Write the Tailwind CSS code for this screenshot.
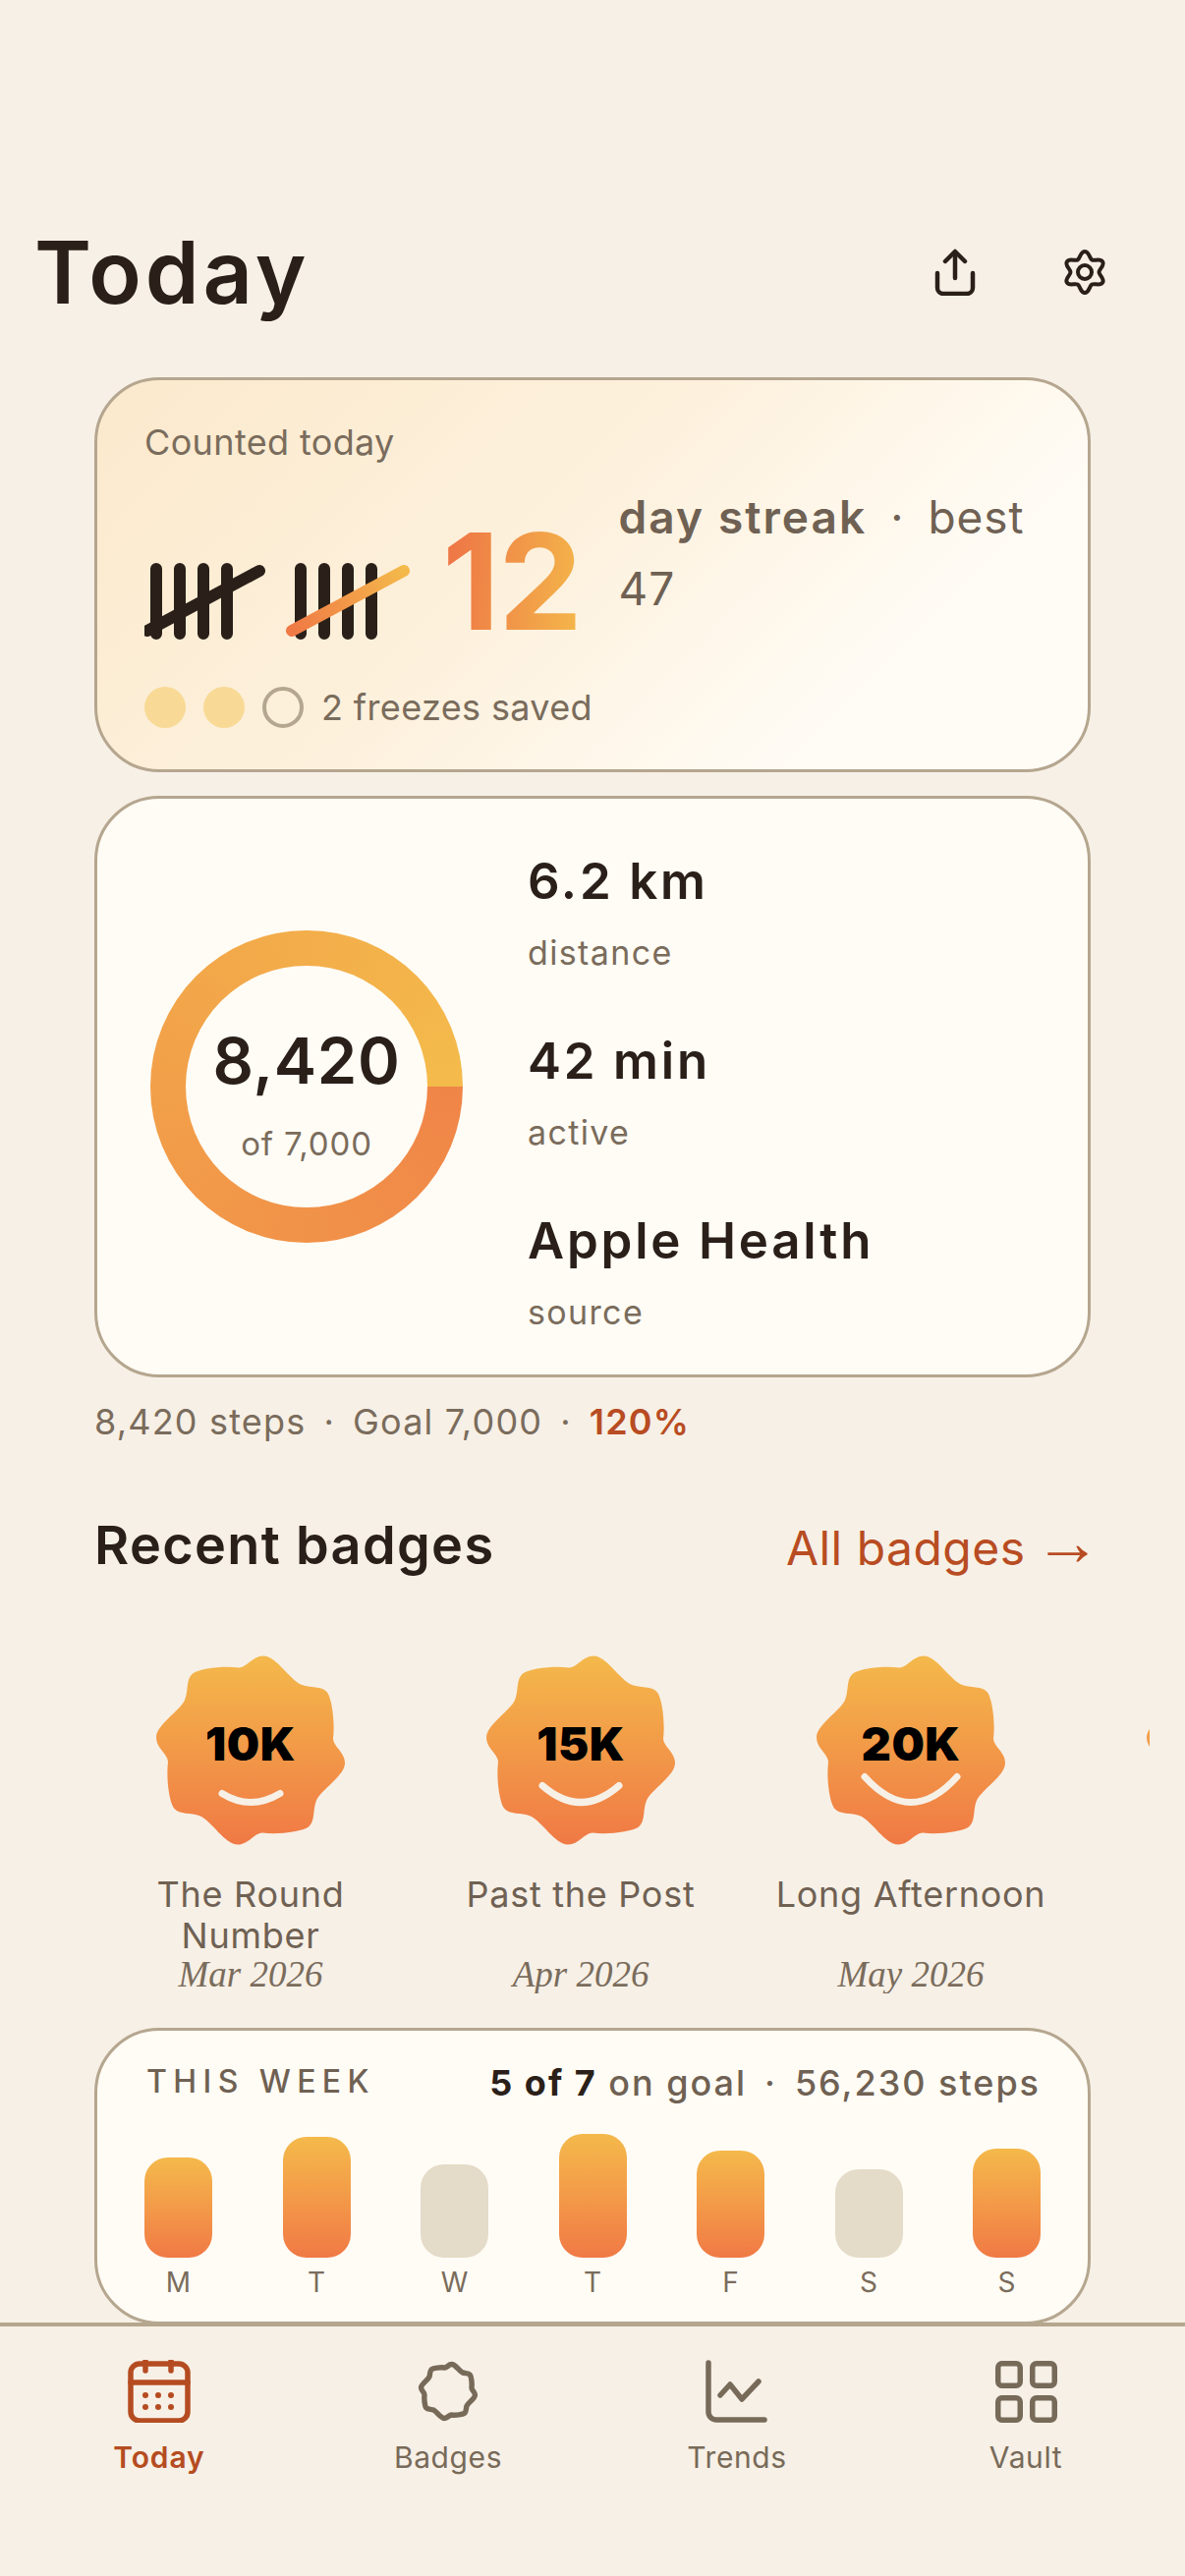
<!DOCTYPE html>
<html lang="en">
<head>
    <meta charset="UTF-8">
    <meta name="viewport" content="width=device-width, initial-scale=1.0">
    <title>Today</title>
    <script src="https://cdn.jsdelivr.net/npm/@tailwindcss/browser@4"></script>
</head>
<body class="relative w-[1206px] h-[2622px] overflow-hidden bg-[#f7f0e6] font-['Inter',sans-serif] text-[#2a2019]">
    <svg width="0" height="0" class="absolute">
        <defs>
            <linearGradient id="warm" x1="0" y1="0" x2="0" y2="1">
                <stop offset="0" stop-color="#f4b94b"/>
                <stop offset="1" stop-color="#f07945"/>
            </linearGradient>
        </defs>
    </svg>

    <!-- header -->
    <header class="pt-[230px] pl-[35px] flex items-center h-[324px]">
        <h1 class="text-[88px] leading-[94px] font-semibold tracking-[0.045em]">Today</h1>
        <div class="ml-auto mr-[78px] flex items-center gap-[84px]">
            <svg width="48" height="48" viewBox="0 0 48 48" fill="none" stroke="#2a2019" stroke-width="4.5" stroke-linecap="round" stroke-linejoin="round">
                <path d="M6 25V40a6 6 0 0 0 6 6H36a6 6 0 0 0 6-6V25"/>
                <path d="M24 30V4"/>
                <path d="M14 13L24 3L34 13"/>
            </svg>
            <svg width="48" height="48" viewBox="0 0 48 48" fill="none" stroke="#2a2019" stroke-width="4" stroke-linejoin="round">
                <path d="M24 3C28.5 3 28.65 9.9 31.25 11.4C33.85 12.9 39.95 9.6 42.2 13.5C44.45 17.4 38.5 21 38.5 24C38.5 27 44.45 30.6 42.2 34.5C39.95 38.4 33.85 35.1 31.25 36.6C28.65 38.1 28.5 45 24 45C19.5 45 19.35 38.1 16.75 36.6C14.15 35.1 8.05 38.4 5.8 34.5C3.55 30.6 9.5 27 9.5 24C9.5 21 3.55 17.4 5.8 13.5C8.05 9.6 14.15 12.9 16.75 11.4C19.35 9.9 19.5 3 24 3Z"/>
                <circle cx="24" cy="24" r="7"/>
            </svg>
        </div>
    </header>

    <main class="px-[96px] mt-[60px]">
        <!-- streak card -->
        <section class="h-[402px] border-[3px] border-[#b5a68f] rounded-[66px] bg-[linear-gradient(135deg,#fbe9cc_0%,#fdf1dd_45%,#fffcf6_80%)] pl-[48px] pt-[39px]">
            <p class="text-[36px] leading-[48px] text-[#7a6c5c] tracking-[0.01em]">Counted today</p>
            <div class="mt-[17px] h-[170px] flex items-start">
                <svg class="mt-[76px] shrink-0" width="270" height="90" viewBox="147 567 270 90" fill="none" stroke-width="12" stroke-linecap="round">
                    <g stroke="#2a2019">
                        <path d="M159 579V645M183 579V645M207 579V645M231 579V645"/>
                        <path d="M150 642L264 581"/>
                        <path d="M306 579V645M330 579V645M354 579V645M378 579V645"/>
                    </g>
                    <path d="M297 642L411 581" stroke="url(#slash2)"/>
                    <defs>
                        <linearGradient id="slash2" gradientUnits="userSpaceOnUse" x1="297" y1="642" x2="411" y2="581">
                            <stop offset="0" stop-color="#f07945"/>
                            <stop offset="1" stop-color="#f4b94b"/>
                        </linearGradient>
                    </defs>
                </svg>
                <span class="ml-[33px] mt-[35px] text-[136px] leading-[132px] font-bold tracking-[-0.01em] bg-[linear-gradient(95deg,#ee7846_10%,#f4b84a)] bg-clip-text text-transparent">12</span>
                <p class="ml-[38px] -mt-[1px] text-[46px] leading-[73px] text-[#6f6153] tracking-[0.02em] whitespace-nowrap"><span class="font-semibold tracking-[0.045em]">day streak</span><span class="mx-[24px]">·</span>best<br>47</p>
            </div>
            <div class="mt-[38px] h-[42px] flex items-center gap-[18px]">
                <span class="w-[42px] h-[42px] rounded-full bg-[#f8da96]"></span>
                <span class="w-[42px] h-[42px] rounded-full bg-[#f8da96]"></span>
                <span class="w-[42px] h-[42px] rounded-full border-[4px] border-[#b5a68f]"></span>
                <span class="text-[36px] leading-[42px] text-[#7a6c5c] tracking-[0.01em]">2 freezes saved</span>
            </div>
        </section>

        <!-- steps card -->
        <section class="mt-[24px] h-[592px] border-[3px] border-[#b5a68f] rounded-[66px] bg-[#fffcf5] pl-[54px] flex items-center">
            <div class="w-[318px] h-[318px] shrink-0 rounded-full bg-[conic-gradient(from_90deg,#f08548,#f4bb4b)] flex items-center justify-center">
                <div class="w-[246px] h-[246px] rounded-full bg-[#fffcf5] flex flex-col items-center justify-center pt-[22px]">
                    <span class="text-[65px] leading-[64px] font-semibold tracking-[0.01em]">8,420</span>
                    <span class="mt-[30px] text-[33px] leading-[44px] text-[#7a6c5c] tracking-[0.025em]">of 7,000</span>
                </div>
            </div>
            <div class="ml-[66px] pt-[13px] flex flex-col gap-[53px]">
                <div>
                    <p class="text-[51px] leading-[64px] font-semibold tracking-[0.055em]">6.2 km</p>
                    <p class="mt-[16px] text-[34px] leading-[50px] text-[#7a6c5c] tracking-[0.04em]">distance</p>
                </div>
                <div>
                    <p class="text-[51px] leading-[64px] font-semibold tracking-[0.055em]">42 min</p>
                    <p class="mt-[16px] text-[34px] leading-[50px] text-[#7a6c5c] tracking-[0.04em]">active</p>
                </div>
                <div>
                    <p class="text-[51px] leading-[64px] font-semibold tracking-[0.055em]">Apple Health</p>
                    <p class="mt-[16px] text-[34px] leading-[50px] text-[#7a6c5c] tracking-[0.04em]">source</p>
                </div>
            </div>
        </section>

        <p class="mt-[21px] text-[36px] leading-[48px] text-[#7a6c5c] tracking-[0.033em]">8,420 steps<span class="mx-[18px]">·</span>Goal 7,000<span class="mx-[18px]">·</span><span class="font-semibold text-[#b84c22]">120%</span></p>

        <!-- recent badges -->
        <div class="mt-[67px] flex items-center justify-between h-[70px]">
            <h2 class="text-[54px] leading-[70px] font-semibold tracking-[0.025em]">Recent badges</h2>
            <a class="flex items-baseline -mr-[11px] -mt-[2px] text-[48px] leading-[70px] text-[#b84c22] tracking-[0.01em]">All badges<span class="ml-[9px] text-[68px] leading-[70px] font-['Liberation_Sans',sans-serif]">→</span></a>
        </div>

        <div class="mt-[77px] -ml-[59px] w-[1133px] overflow-hidden pl-[74px] flex gap-[48px]">
            <div class="w-[288px] shrink-0 flex flex-col items-center text-center">
                <div class="relative w-[192px] h-[193px]">
                    <svg width="192" height="193" viewBox="0 0 192 192"><path fill="url(#warm)" d="M84 12C92 12 98 0 109 0C122 0 136 24 147 29C157 33 168 30 174 37C179 44 182 68 180 84C180 92 192 98 192 109C192 122 168 136 163 147C159 157 162 168 155 174C148 179 124 182 108 180C100 180 94 192 83 192C70 192 56 168 45 163C35 159 24 162 18 155C13 148 10 124 12 108C12 100 0 94 0 83C0 70 24 56 29 45C33 35 30 24 37 18C44 13 68 10 84 12Z"/><path d="M67 140Q96 158 126 140" fill="none" stroke="#f7f0e6" stroke-width="7" stroke-linecap="round"/></svg>
                    <span class="absolute left-0 right-0 top-[62px] text-[47px] leading-[56px] font-black text-black tracking-[0.01em]">10K</span>
                </div>
                <p class="mt-[29px] h-[84px] text-[36px] leading-[42px] text-[#6f6153] tracking-[0.02em]">The Round Number</p>
                <p class="text-[37px] leading-[38px] italic font-['Liberation_Serif',serif] text-[#7a6c5c]">Mar 2026</p>
            </div>
            <div class="w-[288px] shrink-0 flex flex-col items-center text-center">
                <div class="relative w-[192px] h-[193px]">
                    <svg width="192" height="193" viewBox="0 0 192 192"><path fill="url(#warm)" d="M84 12C92 12 98 0 109 0C122 0 136 24 147 29C157 33 168 30 174 37C179 44 182 68 180 84C180 92 192 98 192 109C192 122 168 136 163 147C159 157 162 168 155 174C148 179 124 182 108 180C100 180 94 192 83 192C70 192 56 168 45 163C35 159 24 162 18 155C13 148 10 124 12 108C12 100 0 94 0 83C0 70 24 56 29 45C33 35 30 24 37 18C44 13 68 10 84 12Z"/><path d="M57 132Q96 166 135 132" fill="none" stroke="#f7f0e6" stroke-width="7" stroke-linecap="round"/></svg>
                    <span class="absolute left-0 right-0 top-[62px] text-[47px] leading-[56px] font-black text-black tracking-[0.01em]">15K</span>
                </div>
                <p class="mt-[29px] h-[84px] text-[36px] leading-[42px] text-[#6f6153] tracking-[0.02em]">Past the Post</p>
                <p class="text-[37px] leading-[38px] italic font-['Liberation_Serif',serif] text-[#7a6c5c]">Apr 2026</p>
            </div>
            <div class="w-[288px] shrink-0 flex flex-col items-center text-center">
                <div class="relative w-[192px] h-[193px]">
                    <svg width="192" height="193" viewBox="0 0 192 192"><path fill="url(#warm)" d="M84 12C92 12 98 0 109 0C122 0 136 24 147 29C157 33 168 30 174 37C179 44 182 68 180 84C180 92 192 98 192 109C192 122 168 136 163 147C159 157 162 168 155 174C148 179 124 182 108 180C100 180 94 192 83 192C70 192 56 168 45 163C35 159 24 162 18 155C13 148 10 124 12 108C12 100 0 94 0 83C0 70 24 56 29 45C33 35 30 24 37 18C44 13 68 10 84 12Z"/><path d="M49 123Q96 175 143 123" fill="none" stroke="#f7f0e6" stroke-width="7" stroke-linecap="round"/></svg>
                    <span class="absolute left-0 right-0 top-[62px] text-[47px] leading-[56px] font-black text-black tracking-[0.01em]">20K</span>
                </div>
                <p class="mt-[29px] h-[84px] text-[36px] leading-[42px] text-[#6f6153] tracking-[0.02em] whitespace-nowrap">Long Afternoon</p>
                <p class="text-[37px] leading-[38px] italic font-['Liberation_Serif',serif] text-[#7a6c5c]">May 2026</p>
            </div>
            <div class="w-[288px] shrink-0 flex flex-col items-center">
                <svg width="192" height="193" viewBox="0 0 192 192"><path fill="url(#warm)" d="M84 12C92 12 98 0 109 0C122 0 136 24 147 29C157 33 168 30 174 37C179 44 182 68 180 84C180 92 192 98 192 109C192 122 168 136 163 147C159 157 162 168 155 174C148 179 124 182 108 180C100 180 94 192 83 192C70 192 56 168 45 163C35 159 24 162 18 155C13 148 10 124 12 108C12 100 0 94 0 83C0 70 24 56 29 45C33 35 30 24 37 18C44 13 68 10 84 12Z"/></svg>
            </div>
        </div>

        <!-- this week -->
        <section class="mt-[35px] h-[302px] border-[3px] border-[#b5a68f] rounded-[66px] bg-[#fffcf5] px-[48px] pt-[29px]">
            <div class="flex items-center justify-between h-[48px]">
                <span class="text-[32px] leading-[48px] font-medium tracking-[0.2em] text-[#6f6153] -mt-[2px] ml-[2px]">THIS WEEK</span>
                <span class="text-[36px] leading-[48px] font-medium tracking-[0.055em] text-[#6f6153] whitespace-nowrap"><span class="font-bold text-[#2a2019]">5 of 7</span> on goal<span class="mx-[18px]">·</span>56,230 steps</span>
            </div>
            <div class="flex justify-between items-end h-[154px]">
                <div class="w-[69px] h-[102px] rounded-[24px] bg-linear-to-b from-[#f4b94b] to-[#f07945]"></div>
                <div class="w-[69px] h-[123px] rounded-[24px] bg-linear-to-b from-[#f4b94b] to-[#f07945]"></div>
                <div class="w-[69px] h-[95px] rounded-[24px] bg-[#e4dbc8]"></div>
                <div class="w-[69px] h-[126px] rounded-[24px] bg-linear-to-b from-[#f4b94b] to-[#f07945]"></div>
                <div class="w-[69px] h-[109px] rounded-[24px] bg-linear-to-b from-[#f4b94b] to-[#f07945]"></div>
                <div class="w-[69px] h-[90px] rounded-[24px] bg-[#e4dbc8]"></div>
                <div class="w-[69px] h-[111px] rounded-[24px] bg-linear-to-b from-[#f4b94b] to-[#f07945]"></div>
            </div>
            <div class="mt-[7px] flex justify-between text-[28px] leading-[36px] text-[#7a6c5c] text-center">
                <span class="w-[69px]">M</span>
                <span class="w-[69px]">T</span>
                <span class="w-[69px]">W</span>
                <span class="w-[69px]">T</span>
                <span class="w-[69px]">F</span>
                <span class="w-[69px]">S</span>
                <span class="w-[69px]">S</span>
            </div>
        </section>
    </main>

    <!-- tab bar -->
    <nav class="absolute left-0 right-0 bottom-0 h-[258px] border-t-[4px] border-[#b5a68f] bg-[#f7f0e6] px-[15px] pt-[34px] grid grid-cols-4">
        <a class="flex flex-col items-center text-[#b54c21]">
            <svg width="64" height="64" viewBox="0 0 64 64" fill="none" stroke="currentColor" stroke-width="5.5" stroke-linecap="round">
                <rect x="3" y="4" width="58" height="58" rx="9"/>
                <path d="M3 23H61M18 1V11M44 1V11" />
                <g fill="currentColor" stroke="none">
                    <circle cx="18" cy="36" r="3"/><circle cx="31" cy="36" r="3"/><circle cx="44" cy="36" r="3"/>
                    <circle cx="18" cy="48" r="3"/><circle cx="31" cy="48" r="3"/><circle cx="44" cy="48" r="3"/>
                </g>
            </svg>
            <span class="mt-[15px] text-[30px] leading-[40px] font-semibold tracking-[0.03em]">Today</span>
        </a>
        <a class="flex flex-col items-center text-[#776a59]">
            <svg width="64" height="64" viewBox="-16 -16 224 224" fill="none" stroke="currentColor" stroke-width="19" stroke-linejoin="round">
                <path d="M84 12C92 12 98 0 109 0C122 0 136 24 147 29C157 33 168 30 174 37C179 44 182 68 180 84C180 92 192 98 192 109C192 122 168 136 163 147C159 157 162 168 155 174C148 179 124 182 108 180C100 180 94 192 83 192C70 192 56 168 45 163C35 159 24 162 18 155C13 148 10 124 12 108C12 100 0 94 0 83C0 70 24 56 29 45C33 35 30 24 37 18C44 13 68 10 84 12Z"/>
            </svg>
            <span class="mt-[15px] text-[30px] leading-[40px] tracking-[0.02em]">Badges</span>
        </a>
        <a class="flex flex-col items-center text-[#776a59]">
            <svg width="64" height="64" viewBox="0 0 64 64" fill="none" stroke="currentColor" stroke-width="5.5" stroke-linecap="round" stroke-linejoin="round">
                <path d="M3 3V53a8 8 0 0 0 8 8H60"/>
                <path d="M15 36L25 25L37 40L54 22"/>
            </svg>
            <span class="mt-[15px] text-[30px] leading-[40px] tracking-[0.02em]">Trends</span>
        </a>
        <a class="flex flex-col items-center text-[#776a59]">
            <svg width="64" height="64" viewBox="0 0 64 64" fill="none" stroke="currentColor" stroke-width="5.5">
                <rect x="3.75" y="3.75" width="22.5" height="22.5" rx="4"/>
                <rect x="38.75" y="3.75" width="22.5" height="22.5" rx="4"/>
                <rect x="3.75" y="38.75" width="22.5" height="22.5" rx="4"/>
                <rect x="38.75" y="38.75" width="22.5" height="22.5" rx="4"/>
            </svg>
            <span class="mt-[15px] text-[30px] leading-[40px] tracking-[0.02em]">Vault</span>
        </a>
    </nav>
</body>
</html>
